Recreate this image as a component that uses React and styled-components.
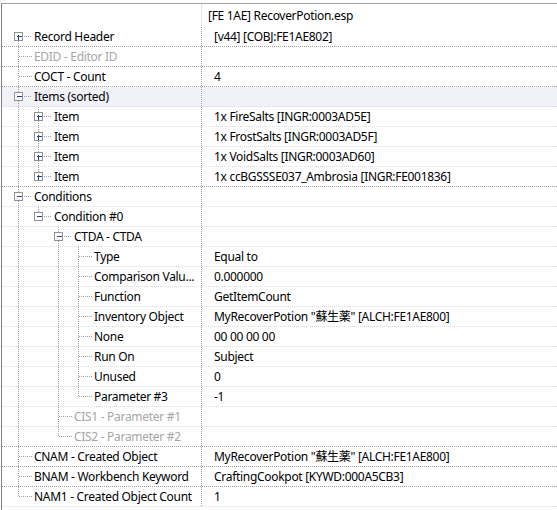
import React from 'react';
import styled, { createGlobalStyle } from 'styled-components';

const GlobalStyle = createGlobalStyle`
  body {
    margin: 0;
    background: #fff;
    font-family: "Segoe UI", "Noto Sans", "Noto Sans CJK JP", sans-serif;
    font-size: 12px;
    letter-spacing: -0.3px;
    color: #000;
  }
`;

const Frame = styled.div`
  margin: 3px 0 0 1px;
  border-top: 1px solid #a0a0a0;
  border-left: 1px solid #828282;
  height: 506px;
  overflow: hidden;
`;

const HeaderRow = styled.div`
  display: flex;
  height: 23px;
  align-items: center;
`;

const HeaderName = styled.div`
  width: 199px;
  height: 100%;
  border-right: 1px solid #e5e5e5;
`;

const HeaderValue = styled.div`
  padding-left: 6px;
  white-space: nowrap;
`;

const Row = styled.div`
  display: flex;
  height: 20px;
  box-sizing: border-box;
  border-bottom: 1px dotted ${p => (p.$strong ? '#a0a0a0' : '#dcdcdc')};
  background: ${p => (p.$selected ? '#f1f2f7' : 'transparent')};
`;

const NameCell = styled.div`
  width: 199px;
  flex: 0 0 199px;
  display: flex;
  align-items: center;
  border-right: 1px dotted #a0a0a0;
  overflow: hidden;
  white-space: nowrap;
`;

const Label = styled.span`
  color: ${p => (p.$disabled ? '#a6a6a6' : '#000')};
  line-height: 20px;
`;

const ValueCell = styled.div`
  padding-left: 12px;
  line-height: 20px;
  white-space: nowrap;
`;

const GUIDE = '#a0a0a0';

// tree connector lines and the +/- expander for one row
function Guides({ level, open, hasKids, rails, last, first }) {
  const w = 32 + level * 20;
  const cx = 16.5 + level * 20;
  return (
    <svg width={w} height={19} style={{ flex: '0 0 auto', display: 'block' }} shapeRendering="crispEdges">
      <g stroke={GUIDE} strokeDasharray="1 1" strokeWidth="1">
        {rails.map((on, a) =>
          on ? <line key={a} x1={16.5 + a * 20} y1={0} x2={16.5 + a * 20} y2={20} /> : null
        )}
        {!first && <line x1={cx} y1={0} x2={cx} y2={10} />}
        {!last && <line x1={cx} y1={10} x2={cx} y2={20} />}
        <line x1={hasKids ? cx + 5 : cx} y1={9.5} x2={cx + 13} y2={9.5} />
      </g>
      {hasKids && (
        <g>
          <rect x={cx - 4} y={5.5} width={8} height={8} fill="#fff" stroke="#919191" />
          <line x1={cx - 2} y1={9.5} x2={cx + 3} y2={9.5} stroke="#26408a" />
          {!open && <line x1={cx} y1={7.5} x2={cx} y2={12.5} stroke="#26408a" />}
        </g>
      )}
    </svg>
  );
}

const potion = 'MyRecoverPotion "蘇生薬" [ALCH:FE1AE800]';

const rows = [
  { name: 'Record Header', level: 0, kids: true, value: ' [v44] [COBJ:FE1AE802]', first: true },
  { name: 'EDID - Editor ID', level: 0, off: true },
  { name: 'COCT - Count', level: 0, value: '4' },
  { name: 'Items (sorted)', level: 0, kids: true, open: true, selected: true },
  { name: 'Item', level: 1, kids: true, rails: [1], value: '1x FireSalts [INGR:0003AD5E]' },
  { name: 'Item', level: 1, kids: true, rails: [1], value: '1x FrostSalts [INGR:0003AD5F]' },
  { name: 'Item', level: 1, kids: true, rails: [1], value: '1x VoidSalts [INGR:0003AD60]' },
  { name: 'Item', level: 1, kids: true, rails: [1], last: true, value: '1x ccBGSSSE037_Ambrosia [INGR:FE001836]' },
  { name: 'Conditions', level: 0, kids: true, open: true },
  { name: 'Condition #0', level: 1, kids: true, open: true, rails: [1], last: true },
  { name: 'CTDA - CTDA', level: 2, kids: true, open: true, rails: [1, 0] },
  { name: 'Type', level: 3, rails: [1, 0, 1], value: 'Equal to' },
  { name: 'Comparison Valu...', level: 3, rails: [1, 0, 1], value: '0.000000' },
  { name: 'Function', level: 3, rails: [1, 0, 1], value: 'GetItemCount' },
  { name: 'Inventory Object', level: 3, rails: [1, 0, 1], value: potion },
  { name: 'None', level: 3, rails: [1, 0, 1], value: '00 00 00 00' },
  { name: 'Run On', level: 3, rails: [1, 0, 1], value: 'Subject' },
  { name: 'Unused', level: 3, rails: [1, 0, 1], value: '0' },
  { name: 'Parameter #3', level: 3, rails: [1, 0, 1], last: true, value: '-1' },
  { name: 'CIS1 - Parameter #1', level: 2, rails: [1, 0], off: true },
  { name: 'CIS2 - Parameter #2', level: 2, rails: [1, 0], last: true, off: true },
  { name: 'CNAM - Created Object', level: 0, value: potion },
  { name: 'BNAM - Workbench Keyword', level: 0, value: 'CraftingCookpot [KYWD:000A5CB3]' },
  { name: 'NAM1 - Created Object Count', level: 0, last: true, value: '1' },
];

export default function App() {
  return (
    <>
      <GlobalStyle />
      <Frame>
        <HeaderRow>
          <HeaderName />
          <HeaderValue>[FE 1AE] RecoverPotion.esp</HeaderValue>
        </HeaderRow>
        {rows.map((r, i) => {
          const next = rows[i + 1];
          return (
            <Row key={i} $selected={r.selected} $strong={next && next.level === 0}>
              <NameCell>
                <Guides
                  level={r.level}
                  open={r.open}
                  hasKids={r.kids}
                  rails={(r.rails || []).map(Boolean)}
                  last={r.last}
                  first={r.first}
                />
                <Label $disabled={r.off}>{r.name}</Label>
              </NameCell>
              <ValueCell>{r.value}</ValueCell>
            </Row>
          );
        })}
      </Frame>
    </>
  );
}
